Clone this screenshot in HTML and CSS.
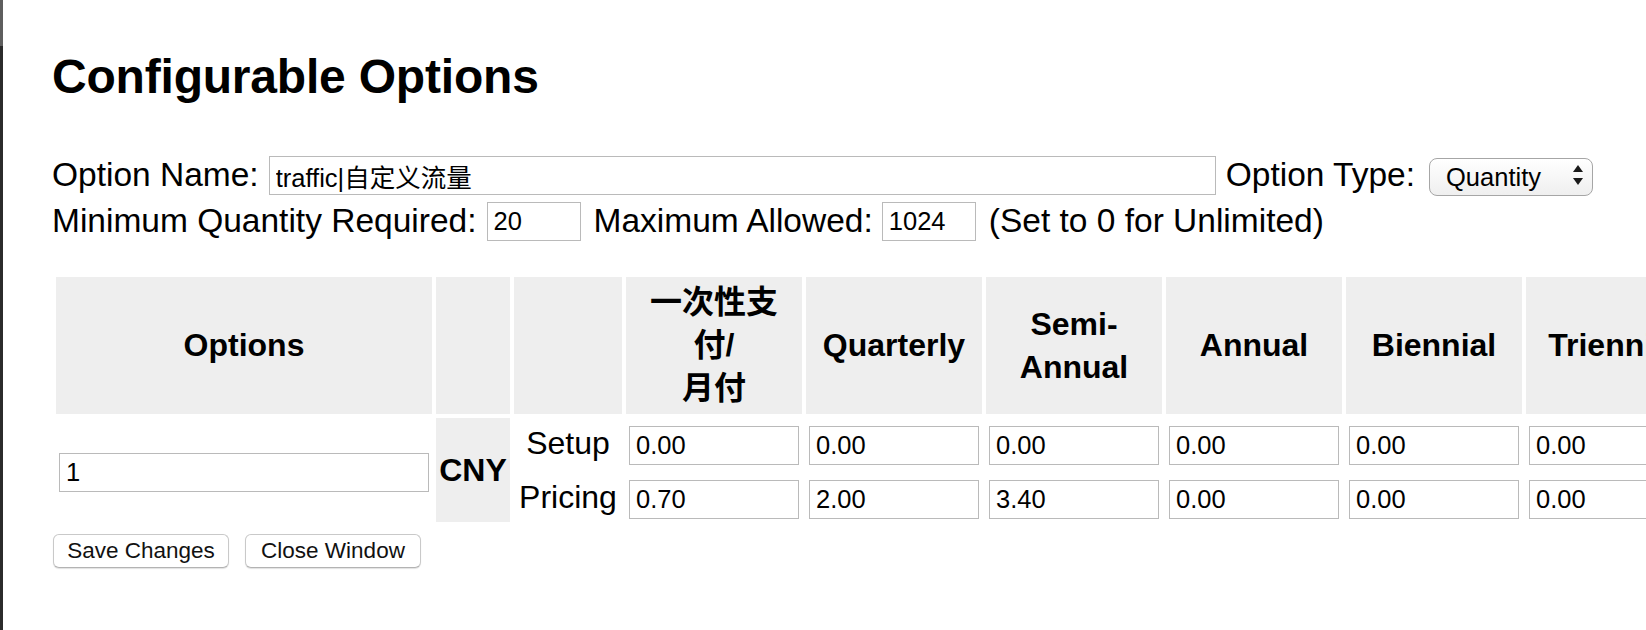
FILE: index.html
```html
<!DOCTYPE html>
<html lang="zh-CN">
<head>
<meta charset="utf-8">
<title>Configurable Options</title>
<link rel="stylesheet" href="styles.css">
</head>
<body>
<div class="edge"></div>
<main class="page">
  <h1 class="title">Configurable Options</h1>
  <form class="config-form">
    <div class="field-row">
      <label class="lbl" for="optname">Option Name:</label>
      <input class="txt name-input" id="optname" type="text" value="traffic|自定义流量">
      <label class="lbl" for="opttype">Option Type:</label>
      <span class="select-wrap">
        <select class="sel" id="opttype">
          <option>Dropdown</option>
          <option>Radio</option>
          <option>Yes/No</option>
          <option selected>Quantity</option>
        </select>
        <svg class="sel-arrows" viewBox="0 0 10 20" aria-hidden="true">
          <path d="M5 0 L10 7 L0 7 Z" fill="#1a1a1a"/>
          <path d="M0 13 L10 13 L5 20 Z" fill="#1a1a1a"/>
        </svg>
      </span>
    </div>
    <div class="field-row">
      <label class="lbl" for="minq">Minimum Quantity Required:</label>
      <input class="txt qty-input min-input" id="minq" type="text" value="20">
      <label class="lbl" for="maxq">Maximum Allowed:</label>
      <input class="txt qty-input max-input" id="maxq" type="text" value="1024">
      <span class="lbl">(Set to 0 for Unlimited)</span>
    </div>

    <table class="pricing">
      <thead>
        <tr>
          <th class="col-options">Options</th>
          <th class="col-cur"></th>
          <th class="col-type"></th>
          <th class="col-period">一次性支<br>付/<br>月付</th>
          <th class="col-period">Quarterly</th>
          <th class="col-period">Semi-Annual</th>
          <th class="col-period">Annual</th>
          <th class="col-period">Biennial</th>
          <th class="col-period">Triennial</th>
        </tr>
      </thead>
      <tbody>
        <tr>
          <td class="opt-cell" rowspan="2"><input class="txt opt-input" type="text" value="1"></td>
          <td class="cur-cell" rowspan="2">CNY</td>
          <td class="type-cell">Setup</td>
          <td><input class="txt price" type="text" value="0.00"></td>
          <td><input class="txt price" type="text" value="0.00"></td>
          <td><input class="txt price" type="text" value="0.00"></td>
          <td><input class="txt price" type="text" value="0.00"></td>
          <td><input class="txt price" type="text" value="0.00"></td>
          <td><input class="txt price" type="text" value="0.00"></td>
        </tr>
        <tr>
          <td class="type-cell">Pricing</td>
          <td><input class="txt price" type="text" value="0.70"></td>
          <td><input class="txt price" type="text" value="2.00"></td>
          <td><input class="txt price" type="text" value="3.40"></td>
          <td><input class="txt price" type="text" value="0.00"></td>
          <td><input class="txt price" type="text" value="0.00"></td>
          <td><input class="txt price" type="text" value="0.00"></td>
        </tr>
      </tbody>
    </table>

    <div class="actions">
      <button type="button" class="btn">Save Changes</button>
      <button type="button" class="btn">Close Window</button>
    </div>
  </form>
</main>
</body>
</html>
```

FILE: styles.css
```css
html, body {
  margin: 0;
  height: 100%;
}

body {
  display: flex;
  background: #ffffff;
  color: #000000;
  font-family: "Liberation Sans", Arial, "Noto Sans CJK SC", sans-serif;
  overflow: hidden;
}

.edge {
  flex: 0 0 3px;
  background: linear-gradient(#5e5e5e 0 46px, #2b2b2b 46px);
}

.page {
  flex: 1;
  min-width: 0;
  padding-left: 49px;
}

.title {
  margin: 49px 0 47px;
  font-size: 48px;
  line-height: 56px;
  font-weight: bold;
  letter-spacing: -0.2px;
}

.field-row {
  display: flex;
  align-items: center;
  height: 46px;
  white-space: nowrap;
  font-size: 33.5px;
}

.txt {
  box-sizing: border-box;
  height: 39px;
  margin: 0;
  padding: 0 6px;
  border: 1px solid #bababa;
  border-radius: 0;
  background: #ffffff;
  color: #000000;
  font: 25.5px "Liberation Sans", Arial, "Noto Sans CJK SC", sans-serif;
  outline: none;
}

.name-input {
  width: 947px;
  margin: 0 10px 0 10px;
}

.qty-input {
  width: 94px;
}

.min-input {
  margin: 0 13px 0 10px;
}

.max-input {
  margin: 0 13px 0 9px;
}

.select-wrap {
  position: relative;
  display: inline-block;
  margin-left: 14px;
  height: 38px;
}

.sel {
  -webkit-appearance: none;
  appearance: none;
  box-sizing: border-box;
  width: 164px;
  height: 38px;
  margin: 0;
  padding: 0 0 0 16px;
  border: 1px solid #a6a6a6;
  border-radius: 8px;
  background: linear-gradient(#ffffff, #efefef);
  color: #000000;
  font: 25.5px "Liberation Sans", Arial, sans-serif;
  outline: none;
}

.sel-arrows {
  position: absolute;
  right: 10px;
  top: 9px;
  width: 10px;
  height: 20px;
  pointer-events: none;
}

.pricing {
  table-layout: fixed;
  width: 1654px;
  border-collapse: separate;
  border-spacing: 4px;
  margin-top: 29px;
  font-size: 32px;
}

.pricing th {
  background: #eeeeee;
  font-weight: bold;
  padding: 4px 2px;
  line-height: 43px;
  text-align: center;
  vertical-align: middle;
}

.col-options { width: 372px; }
.col-cur { width: 70px; }
.col-type { width: 104px; }
.col-period { width: 172px; }

.pricing td {
  padding: 2px;
  line-height: 46px;
  text-align: center;
  vertical-align: middle;
  white-space: nowrap;
}

.pricing td.cur-cell {
  background: #eeeeee;
  font-weight: bold;
}

.opt-input {
  width: 370px;
}

.price {
  width: 170px;
}

.actions {
  display: flex;
  gap: 16px;
  margin: 8px 0 0 1px;
}

.btn {
  box-sizing: border-box;
  width: 176px;
  height: 34px;
  margin: 0;
  padding: 0;
  border: 1px solid #c9c9c9;
  border-bottom-color: #b3b3b3;
  border-radius: 6px;
  background: #ffffff;
  box-shadow: 0 1px 1px rgba(0, 0, 0, 0.12);
  color: #111111;
  font: 22.5px "Liberation Sans", Arial, sans-serif;
}
```
